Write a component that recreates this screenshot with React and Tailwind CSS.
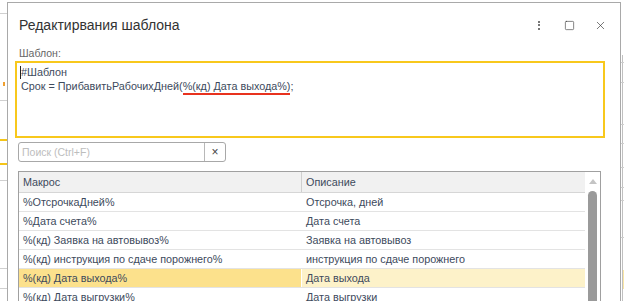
import { X, Square } from "lucide-react";

const rows = [
  ["%ОтсрочкаДней%", "Отсрочка, дней"],
  ["%Дата счета%", "Дата счета"],
  ["%(кд) Заявка на автовывоз%", "Заявка на автовывоз"],
  ["%(кд) инструкция по сдаче порожнего%", "инструкция по сдаче порожнего"],
  ["%(кд) Дата выхода%", "Дата выхода", true],
  ["%(кд) Дата выгрузки%", "Дата выгрузки"],
];

export default function App() {
  return (
    <div className="relative w-[624px] h-[301px] overflow-hidden bg-white font-['Liberation_Sans',Arial,sans-serif] text-[#333]">
      {/* background window behind the dialog */}
      <div className="absolute left-0 top-[13px] w-[7px] h-px bg-[#d0d0d0]" />
      <div className="absolute left-[3px] top-[82px] w-[2px] h-[4px] bg-[#f0a030]" />
      <div className="absolute left-0 top-[100px] w-[7px] h-px bg-[#d0d0d0]" />
      <div className="absolute left-0 top-[139px] w-[7px] h-[2px] bg-[#f5c518]" />
      <div className="absolute left-0 top-[163px] w-[7px] h-[2px] bg-[#f5c518]" />
      <div className="absolute left-0 top-[180px] w-[7px] h-px bg-[#d0d0d0]" />
      <div className="absolute left-0 top-[268px] w-[7px] h-px bg-[#d0d0d0]" />
      <div className="absolute left-0 top-[288px] w-[7px] h-px bg-[#d0d0d0]" />
      <div className="absolute left-[622px] top-[55px] w-px h-[246px] bg-[#c0c0c0]" />
      {[62, 82, 124, 143, 167, 187, 200, 237].map((y) => (
        <div key={y} className="absolute left-[621px] w-[3px] h-px bg-[#cfcfcf]" style={{ top: y }} />
      ))}
      <div className="absolute left-[623px] top-[270px] w-px h-[19px] bg-[#fbe7a6]" />

      {/* dialog */}
      <div className="absolute left-[7px] top-[2px] w-[614px] h-[310px] bg-white border border-b-0 border-[#a9a9a9]">
        <div className="h-[44px] flex items-center pl-[11px] pr-[13px]">
          <div className="text-[14px] text-[#333] leading-none">Редактирвания шаблона</div>
          <div className="ml-auto flex items-center">
            <div className="flex flex-col gap-[1.5px] mr-[24px]">
              <span className="w-[2px] h-[2px] bg-[#777]" />
              <span className="w-[2px] h-[2px] bg-[#777]" />
              <span className="w-[2px] h-[2px] bg-[#777]" />
            </div>
            <Square size={11} strokeWidth={1.3} className="text-[#333] mr-[19px]" />
            <X size={13} strokeWidth={1.2} className="text-[#333]" />
          </div>
        </div>

        <div className="pl-[11px] text-[10.5px] leading-[12px] text-[#666]">Шаблон:</div>

        <div className="mt-[2px] ml-[7px] w-[590px] h-[77px] border-2 border-[#f8c81c] pl-[4px] pt-[2px] text-[10.8px] leading-[14px] text-[#3d4a5c] relative">
          <div className="relative">
            <span className="absolute left-[-1px] top-[1px] w-px h-[13px] bg-[#222]" />
            #Шаблон
          </div>
          <div>
            Срок = ПрибавитьРабочихДней(
            <span className="relative">
              %(кд) Дата выхода%)
              <span className="absolute left-0 right-0 bottom-[-3px] h-[2.5px] bg-[#e8321e]" />
            </span>
            ;
          </div>
        </div>

        <div className="mt-[4px] ml-[10px] w-[208px] h-[20px] flex border border-[#a8a8a8] rounded-[3px] text-[10.5px]">
          <div className="flex-1 pl-[3px] leading-[18px] text-[#bdbdbd]">Поиск (Ctrl+F)</div>
          <div className="w-[21px] border-l border-[#b8b8b8] flex items-center justify-center text-[#444] text-[12px] leading-none">
            ×
          </div>
        </div>

        <div className="mt-[9px] ml-[10px] w-[583px] border border-[#a0a0a0] flex text-[10.8px]">
          <div className="w-[566px]">
            <div className="h-[21px] flex border-b border-[#d6d6d6] bg-[#f1f1f1] text-[#3d4a5c]">
              <div className="w-[283px] pl-[4px] leading-[20px] border-r border-[#cfcfcf]">Макрос</div>
              <div className="flex-1 pl-[4px] leading-[20px]">Описание</div>
            </div>
            {rows.map(([a, b, sel]) => (
              <div key={a} className="h-[19px] flex border-b border-[#e3e3e3] text-[#3d4a5c]">
                <div className={`w-[283px] pl-[4px] leading-[18px] border-r border-white ${sel ? "bg-[#fce18c]" : ""}`}>{a}</div>
                <div className={`flex-1 pl-[4px] leading-[18px] ${sel ? "bg-[#fdf2c9]" : ""}`}>{b}</div>
              </div>
            ))}
          </div>
          <div className="flex-1 flex flex-col items-center pt-[7px]">
            <div className="w-0 h-0 border-l-[4px] border-r-[4px] border-b-[5px] border-l-transparent border-r-transparent border-b-[#c4c4c4]" />
            <div className="mt-[7px] w-[9px] h-[120px] rounded-t-[5px] bg-[#9a9a9a]" />
          </div>
        </div>
      </div>
    </div>
  );
}
